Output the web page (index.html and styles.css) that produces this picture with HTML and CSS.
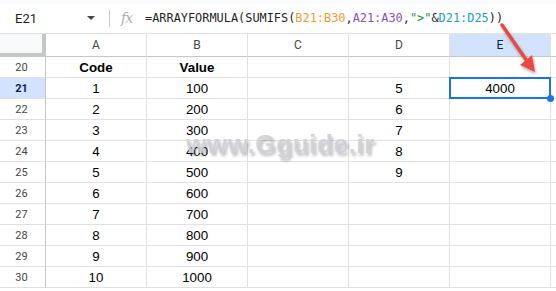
FILE: index.html
```html
<!DOCTYPE html>
<html>
<head>
<meta charset="utf-8">
<link rel="stylesheet" href="styles.css">
</head>
<body>
<div class="page">
  <div class="topstrip"></div>
  <div class="fbar">
    <div class="namebox">E21</div>
    <div class="caret"></div>
    <div class="divider"></div>
    <div class="fx">fx</div>
    <div class="formula">=ARRAYFORMULA(SUMIFS(<span class="r1">B21:B30</span>,<span class="r2">A21:A30</span>,<span class="str">"&gt;"</span>&amp;<span class="r3">D21:D25</span>))</div>
  </div>
  <div class="grid">
    <div class="corner"></div>
    <div class="ch">A</div><div class="ch">B</div><div class="ch">C</div><div class="ch">D</div><div class="ch sel">E</div><div class="ch rest"></div>

    <div class="rh">20</div><div class="c b">Code</div><div class="c b">Value</div><div class="c"></div><div class="c"></div><div class="c"></div><div class="c rest"></div>
    <div class="rh sel">21</div><div class="c">1</div><div class="c">100</div><div class="c"></div><div class="c">5</div><div class="c active">4000<span class="handle"></span></div><div class="c rest"></div>
    <div class="rh">22</div><div class="c">2</div><div class="c">200</div><div class="c"></div><div class="c">6</div><div class="c"></div><div class="c rest"></div>
    <div class="rh">23</div><div class="c">3</div><div class="c">300</div><div class="c"></div><div class="c">7</div><div class="c"></div><div class="c rest"></div>
    <div class="rh">24</div><div class="c">4</div><div class="c">400</div><div class="c"></div><div class="c">8</div><div class="c"></div><div class="c rest"></div>
    <div class="rh">25</div><div class="c">5</div><div class="c">500</div><div class="c"></div><div class="c">9</div><div class="c"></div><div class="c rest"></div>
    <div class="rh">26</div><div class="c">6</div><div class="c">600</div><div class="c"></div><div class="c"></div><div class="c"></div><div class="c rest"></div>
    <div class="rh">27</div><div class="c">7</div><div class="c">700</div><div class="c"></div><div class="c"></div><div class="c"></div><div class="c rest"></div>
    <div class="rh">28</div><div class="c">8</div><div class="c">800</div><div class="c"></div><div class="c"></div><div class="c"></div><div class="c rest"></div>
    <div class="rh">29</div><div class="c">9</div><div class="c">900</div><div class="c"></div><div class="c"></div><div class="c"></div><div class="c rest"></div>
    <div class="rh">30</div><div class="c">10</div><div class="c">1000</div><div class="c"></div><div class="c"></div><div class="c"></div><div class="c rest"></div>
  </div>

  <div class="watermark">www.Gguide.ir</div>

  <svg class="arrow" width="556" height="100" viewBox="0 0 556 100">
    <defs>
      <filter id="sh" x="-50%" y="-50%" width="200%" height="200%">
        <feDropShadow dx="1" dy="2" stdDeviation="1.5" flood-color="#000" flood-opacity="0.35"/>
      </filter>
    </defs>
    <g filter="url(#sh)">
      <line x1="502" y1="25" x2="527" y2="61" stroke="#e84a45" stroke-width="3.5" stroke-linecap="round"/>
      <polygon points="535,72 520,65 532,55" fill="#e84a45"/>
    </g>
  </svg>
</div>
</body>
</html>
```
FILE: styles.css
```css
* { box-sizing: border-box; }
html, body { margin: 0; padding: 0; background: #fff; }
.page {
  position: relative;
  width: 556px;
  height: 291px;
  overflow: hidden;
  font-family: "Liberation Sans", Arial, sans-serif;
}
.topstrip { height: 4px; background: #f9fbfd; }
.fbar {
  height: 30px;
  border-bottom: 1px solid #e1e3e1;
  display: flex;
  align-items: center;
  padding-bottom: 1px;
}
.namebox {
  font-family: "Roboto", "Liberation Sans", sans-serif;
  font-size: 13px;
  color: #1f1f1f;
  margin-left: 15px;
  width: 72px;
}
.caret {
  width: 0; height: 0;
  border-left: 4px solid transparent;
  border-right: 4px solid transparent;
  border-top: 4px solid #444746;
}
.divider {
  width: 1px; height: 17px;
  background: #c7c7c7;
  margin-left: 14px;
}
.fx {
  font-family: "DejaVu Serif", "Liberation Serif", serif;
  font-style: italic;
  font-size: 14px;
  color: #b0b0b0;
  margin-left: 11px;
  width: 24px;
  letter-spacing: -1px;
}
.formula {
  font-family: "DejaVu Sans Mono", "Liberation Mono", monospace;
  font-size: 11.9px;
  color: #1f1f1f;
  white-space: nowrap;
}
.r1 { color: #f39a2e; }
.r2 { color: #8b4cc2; }
.str { color: #1e8e3e; }
.r3 { color: #1a9fd0; }

.grid {
  display: grid;
  grid-template-columns: 46px repeat(5, 101px) 1fr;
  grid-template-rows: 23px repeat(11, 21px);
}
.corner {
  background: #f8f9fa;
  border-right: 4px solid #c4c7c5;
  border-bottom: 4px solid #c4c7c5;
}
.ch {
  border-right: 1px solid #e1e1e1;
  border-bottom: 1px solid #c4c7c5;
  font-family: "Roboto", "Liberation Sans", sans-serif;
  font-size: 12px;
  color: #444746;
  display: flex;
  align-items: center;
  justify-content: center;
}
.ch.sel { background: #d3e3fd; color: #0b1f4a; }
.rh {
  border-right: 1px solid #c4c7c5;
  border-bottom: 1px solid #e1e1e1;
  font-family: "Roboto", "Liberation Sans", sans-serif;
  font-size: 11px;
  color: #444746;
  display: flex;
  align-items: center;
  justify-content: center;
  padding-right: 2px;
}
.rh.sel { background: #d3e3fd; color: #0b1f4a; font-weight: bold; }
.c {
  border-right: 1px solid #e1e1e1;
  border-bottom: 1px solid #e1e1e1;
  font-size: 13.33px;
  color: #000;
  display: flex;
  align-items: center;
  justify-content: center;
  padding-top: 1px;
}
.c.b { font-weight: bold; }
.rest { border-right: none; }
.active { position: relative; }
.active::after {
  content: "";
  position: absolute;
  left: -1px; top: -1px; right: -1px; bottom: -1px;
  border: 2px solid #1a73e8;
}
.handle {
  position: absolute;
  right: -4px; bottom: -4px;
  width: 7px; height: 7px;
  border-radius: 50%;
  background: #1a73e8;
  z-index: 2;
}
.watermark {
  position: absolute;
  left: 186px;
  top: 129px;
  font-family: "Liberation Sans", Arial, sans-serif;
  font-weight: bold;
  font-size: 26px;
  letter-spacing: 0.6px;
  color: rgba(196, 199, 206, 0.75);
  text-shadow: 0 0 1px rgba(255,255,255,0.6), 2px 3px 3px rgba(0,0,0,0.25);
  pointer-events: none;
}
.arrow {
  position: absolute;
  left: 0; top: 0;
  pointer-events: none;
}
```
